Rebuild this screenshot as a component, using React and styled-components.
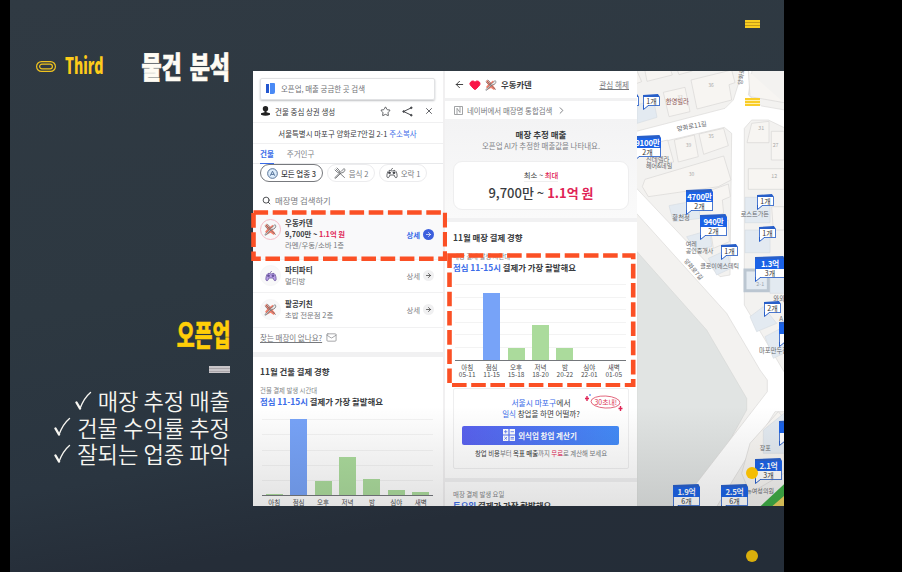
import React from "react";
import styled, { createGlobalStyle, css } from "styled-components";
import { ArrowLeft, ArrowRight, Star, X, Search, Mail, ChevronRight, Heart } from "lucide-react";

const Global = createGlobalStyle`
  *{box-sizing:border-box}
  html,body{margin:0;background:#000}
  body{font-family:"Noto Sans CJK KR","Noto Sans",sans-serif;overflow:hidden}
  svg{display:block;flex:none}
`;

const Stage = styled.main`width:902px;height:572px;padding-left:10px;background:#000;overflow:hidden`;
const Slide = styled.div`
  position:relative;width:774px;height:572px;display:grid;grid-template-columns:220px 531px;column-gap:23px;
  background:linear-gradient(170deg,#303a43 0%,#2d3841 45%,#2a3540 70%,#252d38 84%,#242d38 100%);
`;
const Aside = styled.div`display:flex;flex-direction:column;align-items:flex-end;padding-top:46px`;
const TitleRow = styled.div`display:flex;width:100%;height:40px;align-items:center;padding-left:26px`;
const Third = styled.div`
  width:38px;margin:-4px 0 0 9px;font:900 22px/36px "Noto Sans CJK KR",sans-serif;color:#fdcb1a;
  transform:scaleX(.64);transform-origin:left;white-space:nowrap;
`;
const Title = styled.h1`
  flex:1;display:flex;justify-content:flex-end;margin:-2px 0 0;font-weight:900;font-size:30px;line-height:38px;color:#fffcf4;
  white-space:nowrap;word-spacing:4px;-webkit-text-stroke:.7px #fffcf4;transform:scaleX(.73);transform-origin:right;
`;
const Name = styled.h2`
  margin:227px 0 0;font-weight:900;font-size:29.5px;line-height:41px;color:#ffce08;white-space:nowrap;
  -webkit-text-stroke:.5px #ffce08;transform:scaleX(.66);transform-origin:right;
`;
const Stripes = styled.div`
  width:${p => p.$w}px;height:${p => p.$h}px;margin-top:${p => p.$mt || 0}px;
  background:repeating-linear-gradient(${p => p.$c} 0 2px,${p => p.$d} 2px 3px);
`;
const Points = styled.ul`list-style:none;margin:14px 0 0;padding:0`;
const Point = styled.li`
  display:flex;justify-content:flex-end;align-items:center;gap:6px;height:26.6px;font-size:22.2px;font-weight:350;
  line-height:26.6px;color:#f6f5f0;white-space:nowrap;
`;
const Overlay = styled.div`position:absolute;left:${p => p.$x}px;top:${p => p.$y}px`;
const Dot = styled.div`width:12px;height:12px;border-radius:50%;background:${p => p.$c}`;

const Capture = styled.section`
  position:relative;margin-top:71px;width:531px;height:435px;display:grid;grid-template-columns:190px 194px 147px;
  overflow:hidden;background:#fff;
`;
const Shade = styled.div`
  position:absolute;inset:auto 0 0 0;height:100px;background:linear-gradient(rgba(20,20,20,0),rgba(20,20,20,.12));
`;
const Panel = styled.div`overflow:hidden;height:435px;border-left:${p => p.$line ? "2px solid #f1f0f1" : "0"};background:#fff`;
const Txt = styled.span`
  font-size:${p => p.$s || 7.5}px;font-weight:${p => p.$b || 400};color:${p => p.$c || "#3a3c40"};
  line-height:${p => p.$lh || 11}px;margin-top:${p => p.$mt || 0}px;white-space:nowrap;
  ${p => p.$u && css`text-decoration:underline;text-underline-offset:1px`};
`;
const Row = styled.div`
  display:flex;align-items:center;height:${p => p.$h}px;padding:${p => p.$pt || 0}px ${p => p.$pr || 8}px ${p => p.$pb || 0}px ${p => p.$pl || 7}px;
  gap:${p => p.$g || 0}px;justify-content:${p => p.$j || "flex-start"};border-bottom:${p => p.$line ? "1px solid #f0f0f1" : "0"};
`;
const SearchBox = styled.div`
  display:flex;align-items:center;gap:6px;margin:7px 8px 0 7px;padding:0 0 1px 5px;height:22px;border-radius:2px;
  border:1px solid #e1e2e4;box-shadow:0 1px 2px #bfc1c4;
`;
const Push = styled.div`margin-left:auto;display:flex;align-items:center;gap:${p => p.$g || 0}px`;
const Tabs = styled.div`display:flex;gap:13px;height:20px;padding-left:7px;border-bottom:1px solid #e8e9eb`;
const Tab = styled.div`
  height:20px;padding-top:4px;line-height:11px;font-size:7.5px;font-weight:${p => p.$on ? 700 : 400};
  color:${p => p.$on ? "#3a6be8" : "#808287"};border-bottom:${p => p.$on ? "1.5px solid #3a6be8" : "0"};
`;
const Chips = styled.div`display:flex;gap:4px;height:18px;padding-left:7px`;
const Chip = styled.div`
  display:flex;align-items:center;justify-content:center;gap:3px;width:${p => p.$w}px;height:18px;border-radius:9px;
  border:1px solid ${p => p.$on ? "#77797d" : "#ececee"};
`;
const Item = styled.div`
  display:flex;height:${p => p.$h}px;align-items:center;padding:0 9px 1px 7px;gap:4px;
  background:${p => p.$on ? "#f9f9fa" : "#fff"};border-bottom:1px solid #f1f1f2;
`;
const Lines = styled.div`display:flex;flex-direction:column`;
const Avatar = styled.div`
  display:flex;align-items:center;justify-content:center;width:21px;height:21px;border-radius:50%;background:#f8f8f9;
  border:1px solid ${p => p.$on ? "#f6bac5" : "#f6f6f7"};margin-top:${p => p.$on ? -10 : 0}px;
`;
const Go = styled.div`
  display:flex;align-items:center;justify-content:center;width:11px;height:11px;border-radius:50%;
  background:${p => p.$on ? "#3c5fdd" : "#f0f0f1"};color:${p => p.$on ? "#fff" : "#333"};
`;
const Band = styled.div`height:${p => p.$h || 5}px;background:#f1f1f2`;
const Trend = styled.div`display:flex;flex-direction:column;padding:${p => p.$pt}px 0 0 ${p => p.$pl || 7}px`;
const Plot = styled.div`
  display:flex;justify-content:space-between;align-items:flex-end;width:171px;height:${p => p.$h}px;
  margin:${p => p.$mt}px 0 0 ${p => p.$ml}px;padding:0 4px;border-bottom:1px solid #74777b;
  background:repeating-linear-gradient(#f3f3f3 0 1px,transparent 1px ${p => p.$step}px);
`;
const Bar = styled.div`width:17px;height:${p => p.$h}px;background:${p => p.$on ? "#77a3f8" : "#abdb9c"}`;
const Axis = styled.div`display:flex;justify-content:space-between;width:171px;margin:${p => p.$mt}px 0 0 ${p => p.$ml}px`;
const Tick = styled.div`
  display:flex;flex-direction:column;align-items:center;width:25px;font-size:6.5px;line-height:${p => p.$lh}px;
  color:#4b4d50;white-space:nowrap;
`;
const Estimate = styled.div`
  display:flex;flex-direction:column;align-items:center;height:99px;padding-top:9px;background:linear-gradient(#f3f3f4,#fafafa);
`;
const Card = styled.div`
  display:flex;flex-direction:column;align-items:center;width:176px;height:${p => p.$h}px;border-radius:${p => p.$r}px;
  margin-top:${p => p.$mt || 0}px;padding-top:${p => p.$pt}px;background:#fff;border:1px solid #eeeeef;
`;
const Rule = styled.div`width:34px;height:1px;background:#eee`;
const Cta = styled.div`
  display:flex;align-items:center;justify-content:center;gap:3px;width:157px;height:19px;margin:6px 2px 0 0;border-radius:2px;
  background:linear-gradient(90deg,#5961ee,#438bf7);
`;
const Map = styled.div`position:relative;height:435px;overflow:hidden;background:#f3f2f0`;
const PinBox = styled.div`
  position:absolute;left:${p => p.$x - 637}px;top:${p => p.$y - 71}px;width:${p => p.$w}px;
`;
const PinCap = styled.div`height:3px;background:#285fc9;clip-path:polygon(0 1px,${p => p.$small ? "88%" : "94%"} 0,100% 3px,0 3px)`;
const PinHead = styled.div`
  height:10px;background:#1b62e6;color:#fff;font-size:7.8px;font-weight:700;line-height:9px;text-align:center;
  white-space:nowrap;letter-spacing:-.2px;
`;
const PinCount = styled.div`
  height:9px;font-size:7px;line-height:8px;color:#333;text-align:center;white-space:nowrap;background:#fff;
  border:1px solid #4a78d0;border-top:0;
`;
const PinTail = styled.svg`margin-top:-1px`;

function Cutlery({ s = 13, red }) {
  return (
    <svg width={s} height={s} viewBox="0 0 24 24" fill="none" stroke={red ? "#66686c" : "#4b4d52"} strokeWidth="1.4" strokeLinecap="round">
      {red && <path d="M2 4 5 2l5 6 6-5 4 6-4 4 5 6-3 3-6-4-6 3-4-5 4-5Z" fill="#f7806c" stroke="none" />}
      <path d="m2 21 12-12 6-6c3 2 2 6-2 8l-4 1L4 22Z" fill="#f2f2f2" />
      <path d="m2 6 4 4c2 2 4 1 4 1l11 10M6 2l4 4c2 2 1 4 1 4M4 4l5 5" />
    </svg>
  );
}
const Pad = ({ fill = "none", stroke = "#3f4146" }) => (
  <svg width="12" height="12" viewBox="0 0 24 24" fill={fill} stroke={stroke} strokeWidth="1.6" strokeLinejoin="round">
    <path d="M10 7c0-3 2-1 3-5" fill="none" />
    <path d="M6 7c3-1 4 1 6 1s3-2 6-1c3 1 5 10 4 13-1 2-3 2-4 0l-2-4H8l-2 4c-1 2-3 2-4 0C1 17 3 8 6 7Z" />
    <circle cx="7" cy="11.5" r="2" fill={stroke} /><circle cx="16" cy="11.5" r="2" fill={stroke} />
  </svg>
);
const Check = () => (
  <svg width="17" height="21" viewBox="0 0 17 21" fill="none" stroke="#f6f5f0" strokeLinecap="round">
    <path d="M1.5 12.5 5 18.5" strokeWidth="2.4" /><path d="M5 18.5Q9 8 15.5 2.5" strokeWidth="1.4" />
  </svg>
);
const Share = () => (
  <svg width="11" height="11" viewBox="0 0 11 11" stroke="#44464a" fill="#44464a">
    <path d="M9.3 1.8 1.6 5.5l7.7 3.7" fill="none" /><circle cx="9.3" cy="1.8" r=".8" /><circle cx="1.6" cy="5.5" r=".8" /><circle cx="9.3" cy="9.2" r=".8" />
  </svg>
);
const Dashes = ({ w, h }) => (
  <svg width={w + 5} height={h + 5} fill="none">
    <rect x="2.5" y="2.5" width={w} height={h} stroke="#fb5025" strokeWidth="4.6" strokeDasharray="14.6 4.6" />
  </svg>
);
const Pin = ({ x, y, w = 27, v, n }) => (
  <PinBox $x={x} $y={y - 1} $w={w}>
    <PinCap $small={!v} />
    {v && <PinHead>{v}</PinHead>}
    <PinCount>{n}</PinCount>
    <PinTail width="7" height="5" viewBox="0 0 7 5"><path d="M.5 0V4.5L6 0" fill="#fff" stroke="#285fc9" /></PinTail>
  </PinBox>
);
function Chart({ bars, h, step, mt, ml, ranges }) {
  const names = ["아침", "점심", "오후", "저녁", "밤", "심야", "새벽"];
  return (
    <>
      <Plot $h={h} $step={step} $mt={mt} $ml={ml}>{bars.map((b, i) => <Bar key={i} $h={b} $on={i === 1} />)}</Plot>
      <Axis $ml={ml} $mt={ranges ? 3 : 1}>
        {names.map((n, i) => <Tick key={n} $lh={ranges ? 6.8 : 10}><span>{n}</span>{ranges && <span>{ranges[i]}</span>}</Tick>)}
      </Axis>
    </>
  );
}
const Shop = ({ h, on, icon, name, kind, price }) => (
  <Item $h={h} $on={on}>
    <Avatar $on={on}>{icon}</Avatar>
    <Lines>
      <Txt $b={700} $s={7.5} $lh={10.6}>{name}</Txt>
      {price && <Txt $b={700} $s={7.3} $lh={10.6}>9,700만 ~ <Txt $b={700} $s={7.3} $c="#df2456">1.1억 원</Txt></Txt>}
      <Txt $c="#77797d" $s={7.4} $lh={10.6}>{kind}</Txt>
    </Lines>
    <Push $g={3}><Txt $s={7.4} $b={on ? 700 : 400} $c={on ? "#3a6be8" : "#808287"}>상세</Txt><Go $on={on}><ArrowRight size={7} strokeWidth={2.4} /></Go></Push>
  </Item>
);

function BuildingPanel() {
  return (
    <Panel>
      <SearchBox>
        <svg width="9" height="11" viewBox="0 0 9 11"><path d="M0 1h3v9H0Z" fill="#2457cf" /><path d="M4 0h4q1 0 1 1v8q0 2-2 2H4Z" fill="#4a8af5" /></svg>
        <Txt $c="#707276" $s={7.45}>오픈업, 매출 궁금한 곳 검색</Txt>
      </SearchBox>
      <Row $h={23} $pl={8} $g={5} $pr={9} $line>
        <svg width="9" height="10" viewBox="0 0 9 10" fill="#222"><circle cx="4.5" cy="2.8" r="2.7" /><path d="M3.5 4h2v2.3L9 7.2v1.5Q4.5 11 0 8.7V7.2l3.5-.9Z" /></svg>
        <Txt>건물 중심 상권 생성</Txt>
        <Push $g={11}><Star size={11} color="#44464a" strokeWidth={1.8} /><Share /><X size={10} color="#44464a" strokeWidth={2} /></Push>
      </Row>
      <Row $h={21} $j="center" $g={2} $line><Txt $s={7.45}>서울특별시 마포구 양화로7안길 2-1</Txt><Txt $s={7.45} $c="#3a6be8">주소복사</Txt></Row>
      <Tabs><Tab $on>건물</Tab><Tab>주거인구</Tab></Tabs>
      <Chips>
        <Chip $w={63} $on>
          <svg width="11" height="11" viewBox="0 0 12 12" fill="#dcecfb" stroke="#4c6991"><circle cx="6" cy="6" r="5.3" /><path d="m3.5 8.5 2.5-5 2.5 5M4.5 7h3" fill="none" /></svg>
          <Txt $b={500} $s={7.5}>모든 업종 3</Txt>
        </Chip>
        <Chip $w={48}><Cutlery s={12} /><Txt $c="#77797d">음식 2</Txt></Chip>
        <Chip $w={48}><Pad /><Txt $c="#77797d">오락 1</Txt></Chip>
      </Chips>
      <Row $h={29} $pl={9} $g={4} $pt={8}><Search size={9} color="#44464a" strokeWidth={2.5} /><Txt $c="#77797d" $s={8.4}>매장명 검색하기</Txt></Row>
      <Shop h={49} on icon={<Cutlery red />} name="우동카덴" kind="라멘/우동/소바 1층" price />
      <Shop h={33} icon={<Pad fill="#baa0e8" stroke="#665399" />} name="파티파티" kind="멀티방" />
      <Shop h={35} icon={<Cutlery red />} name="팔공키친" kind="초밥 전문점 2층" />
      <Row $h={24} $g={4} $pb={5}><Txt $s={7.5} $c="#77797d" $u>찾는 매장이 없나요?</Txt><Mail size={11} color="#85878a" strokeWidth={1.6} /></Row>
      <Band />
      <Trend $pt={8}>
        <Txt $b={700} $s={8.4} $lh={12}>11월 건물 결제 경향</Txt>
        <Txt $s={6.4} $lh={8} $mt={10} $c="#85878a">건물 결제 발생 시간대</Txt>
        <Txt $b={700} $s={8.4} $lh={12}><Txt $b={700} $s={8.4} $c="#3a6be8">점심 11-15시</Txt> 결제가 가장 활발해요</Txt>
      </Trend>
      <Chart bars={[1, 76, 14, 38, 16, 5, 3]} h={77} step={15.3} mt={12} ml={9} />
    </Panel>
  );
}

function StorePanel() {
  return (
    <Panel $line>
      <Row $h={27} $pl={9} $g={4} $pr={8}>
        <ArrowLeft size={11} color="#333" /><Heart size={12} color="#f91748" fill="#f91748" /><Cutlery s={12} red />
        <Txt $b={700} $s={8.4}>우동카덴</Txt><Push><Txt $c="#77797d" $u $s={7.6}>관심 해제</Txt></Push>
      </Row>
      <Band $h={3} />
      <Row $h={18} $pl={9} $g={4}>
        <svg width="9" height="9" viewBox="0 0 9 9" fill="none" stroke="#898b8e" strokeWidth=".8"><path d="M.5.5h8v8h-8ZM3 8V2.3L6 6.5V1" /></svg>
        <Txt $c="#77797d" $s={7.45}>네이버에서 매장명 통합검색</Txt><ChevronRight size={11} color="#77797d" />
      </Row>
      <Estimate>
        <Txt $b={700} $s={8.5} $lh={12}>매장 추정 매출</Txt>
        <Txt $c="#818387" $s={7.45} $lh={12}>오픈업 AI가 추정한 매출값을 나타내요.</Txt>
        <Card $h={49} $r={9} $mt={9} $pt={6}>
          <Txt $s={7.4} $lh={13}>최소 ~ <Txt $s={7.4} $b={500} $c="#df2456">최대</Txt></Txt>
          <Rule />
          <Txt $b={500} $s={13} $lh={22}>9,700만 ~ <Txt $b={700} $s={13} $c="#df2456">1.1억 원</Txt></Txt>
        </Card>
      </Estimate>
      <Band $h={4} />
      <Trend $pt={9} $pl={8}>
        <Txt $b={700} $s={8.4} $lh={12}>11월 매장 결제 경향</Txt>
        <Txt $s={6.4} $lh={8} $mt={10} $c="#85878a">매장 결제 발생 시간대</Txt>
        <Txt $b={700} $s={8.4} $lh={12}><Txt $b={700} $s={8.4} $c="#3a6be8">점심 11-15시</Txt> 결제가 가장 활발해요</Txt>
      </Trend>
      <Chart bars={[0, 67, 12, 35, 12, 0, 0]} h={77} step={12.6} mt={11} ml={10} ranges={["05-11", "11-15", "15-18", "18-20", "20-22", "22-01", "01-05"]} />
      <Row $h={100} $pl={8} $pt={1}>
        <Card $h={81} $r={2} $pt={8}>
          <Txt $s={7.8} $lh={11.5}><Txt $s={7.8} $c="#3a6be8">서울시 마포구</Txt>에서</Txt>
          <Txt $s={7.5} $lh={11.5}><Txt $s={7.5} $c="#3a6be8">일식</Txt> 창업을 하면 어떨까?</Txt>
          <Cta>
            <svg width="12" height="12" viewBox="0 0 12 12"><path d="M0 0h5.4v5.4H0ZM6.6 0H12v5.4H6.6ZM0 6.6h5.4V12H0ZM6.6 6.6H12V12H6.6Z" fill="#fff" /><path d="M1 2.7h3.4M2.7 1v3.4M7.6 2.7H11M1.4 8l2.6 2.6M4 8l-2.6 2.6M7.6 8.5H11M7.6 10H11" stroke="#5571f0" strokeWidth=".8" /></svg>
            <Txt $c="#fff" $b={700} $s={7.5}>외식업 창업 계산기</Txt>
          </Cta>
          <Txt $s={6.4} $lh={17} $c="#77797d"><Txt $s={6.4}>창업 비용</Txt>부터 <Txt $s={6.4} $b={500}>목표 매출</Txt>까지 <Txt $s={6.4} $c="#df2456">무료</Txt>로 계산해 보세요</Txt>
        </Card>
      </Row>
      <Band $h={4} />
      <Trend $pt={8} $pl={8}>
        <Txt $s={6.4} $lh={9} $c="#85878a">매장 결제 발생 요일</Txt>
        <Txt $b={700} $s={8.4} $lh={12}><Txt $b={700} $s={8.4} $c="#3a6be8">토요일</Txt> 결제가 가장 활발해요</Txt>
      </Trend>
    </Panel>
  );
}

const MapText = styled.text`font-family:"Noto Sans CJK KR",sans-serif;font-size:${p => p.$s || 19}px;fill:${p => p.$c || "#66686c"}`;

function StreetMap() {
  return (
    <Map>
      <svg width="147" height="435" viewBox="6 213 441 1305" preserveAspectRatio="none">
        <path d="M6 755 215 990 335 1195V1230L175 1518H6Z" fill="#e1e4e3" stroke="#d6d8d6" strokeWidth="2" />
        <g fill="#fff" stroke="#dbdad8" strokeWidth="2">
          <path d="M0 395 270 325 295 300 325 205H352L340 285 380 318 450 330V384L400 360H350L328 385V915L450 1120V1235H420L245 1520H130L397 1175V1140L375 1110 275 940 0 635V560L255 830 285 825 290 400 268 382 75 427 0 443Z" />
        </g>
        <g fill="#f7f5f2" stroke="#d8d7d4" strokeWidth="2">
          <path d="M168 240 290 210 300 248 282 254 290 300 186 327ZM85 277 150 262 165 335 102 350ZM6 213 20 245 6 250M30 213 36 244 112 225 108 213M128 213 132 224 172 213" />
          <path d="M118 420 178 405 190 470 130 486ZM192 402 266 385 280 437 206 463ZM62 428 98 420 116 486 70 492ZM22 560 30 538 266 468 288 540 250 560 40 590Z" />
          <path d="M336 428 350 370 402 364V428ZM409 394H447V480H409ZM340 506H447V568H340ZM340 213 345 290 447 308M225 680 280 660 283 725 235 745Z" />
          <path d="M215 575 280 552 286 590 262 600 266 640 230 650M410 620H447V690H415ZM345 1330 430 1235 447 1255V1420L345 1480 320 1420Z" />
        </g>
        <g fill="#e3eaf1" stroke="#d6dce3" strokeWidth="2">
          <path d="M6 315 56 300 66 352 6 370ZM102 617 190 600 195 655 115 665ZM155 710 225 690 230 740 180 750ZM220 775 275 750 288 805 245 825Z" />
          <path d="M330 592H405V668H330ZM330 690H405V758H330ZM405 800H447V880H405ZM345 950 385 920 425 970 365 995ZM390 1010 447 980V1060L415 1075ZM385 1290 447 1240V1360H385Z" />
          <path d="M330 810H400V872H330Z" stroke="#bbc6d1" strokeWidth="9" />
        </g>
        <path d="M375 1520 450 1450V1520Z" fill="#3dab45" /><path d="M410 1520 450 1485V1520Z" fill="#e9cf5e" />
        <g transform="translate(0 6)">
          <MapText x="220" y="254" $s={15} $c="#aaa">36</MapText><MapText x="152" y="434" $s={15} $c="#aaa">39</MapText><MapText x="220" y="408" $s={15} $c="#aaa">35</MapText>
          <MapText x="161" y="522" $s={15} $c="#aaa">30</MapText><MapText x="370" y="383" $s={16} $c="#aaa">31</MapText><MapText x="413" y="435" $s={16} $c="#aaa">27</MapText>
          <MapText x="409" y="527" $s={16} $c="#aaa">12</MapText><MapText x="364" y="852" $s={16} $c="#9aa3ad">2-1</MapText><MapText x="127" y="290" $s={14} $c="#c5c2c0">32</MapText>
          <MapText x="92" y="307" $c="#8d5452">한영빌라</MapText><MapText x="33" y="479">신데렐라</MapText><MapText x="33" y="499" $s={18}>헤어&amp;네일</MapText>
          <MapText x="112" y="655">황천정</MapText><MapText x="317" y="643" $s={18.5}>로스트가든</MapText><MapText x="152" y="733" $s={18}>여레</MapText>
          <MapText x="152" y="754" $s={18}>공인중개사</MapText><MapText x="196" y="797" $s={18}>클로이에스테틱</MapText><MapText x="415" y="897">와와</MapText><MapText x="433" y="957">A</MapText>
          <MapText x="372" y="1054">마포만두집</MapText><MapText x="374" y="1344" $s={18}>장포</MapText><MapText x="334" y="1472" $s={18}>뉴여성의원</MapText>
        </g>
        <MapText transform="translate(127 394) rotate(-11)" $s={19}>양화로11길</MapText>
        <MapText transform="translate(146 783) rotate(50)" $s={18}>양화로7길</MapText>
        <MapText transform="translate(322 255) rotate(-83)" $s={18}>양화로</MapText>
      </svg>
      <Pin x={622} y={95} w={17} n="" /><Pin x={643} y={95} w={17} n="1개" />
      <Pin x={634} y={136} v="9100만" n="2개" /><Pin x={686} y={190} v="4700만" n="2개" /><Pin x={700} y={215} v="940만" n="2개" />
      <Pin x={757} y={195} w={17} n="1개" /><Pin x={759} y={227} w={17} n="1개" /><Pin x={721} y={245} w={17} n="1개" />
      <Pin x={755} y={257} w={30} v="1.3억" n="3개" /><Pin x={764} y={302} w={17} n="2개" /><Pin x={779} y={322} v="9" n="" />
      <Pin x={779} y={421} v="4" n="" /><Pin x={755} y={459} v="2.1억" n="3개" /><Pin x={673} y={485} v="1.9억" n="6개" /><Pin x={721} y={485} v="2.5억" n="6개" />
    </Map>
  );
}

export default function App() {
  return (
    <Stage>
      <Global />
      <Slide>
        <Aside>
          <TitleRow>
            <svg width="20" height="11" viewBox="0 0 20 11" fill="none" stroke="#f0c31f"><rect x=".6" y=".6" width="18.8" height="9.8" rx="4.9" strokeWidth="1.2" /><rect x="3.6" y="3.2" width="12.8" height="4.6" rx="2.3" strokeWidth="1.2" /></svg>
            <Third>Third</Third>
            <Title>물건 분석</Title>
          </TitleRow>
          <Name>오픈업</Name>
          <Stripes $w={21} $h={7} $mt={12} $c="#c9c6c9" $d="#aaa6aa" />
          <Points>
            {["매장 추정 매출", "건물 수익률 추정", "잘되는 업종 파악"].map(t => <Point key={t}><Check />{t}</Point>)}
          </Points>
        </Aside>
        <Capture><BuildingPanel /><StorePanel /><StreetMap /><Shade /></Capture>
        <Overlay $x={240.5} $y={209.5}><Dashes w={191.7} h={46.3} /></Overlay>
        <Overlay $x={437.1} $y={252.8}><Dashes w={183.7} h={129.7} /></Overlay>
        <Overlay $x={575} $y={393}>
          <svg width="40" height="20" viewBox="0 0 40 20" fill="none" stroke="#dc4560"><ellipse cx="20.5" cy="9" rx="14.5" ry="6" strokeWidth=".8" transform="rotate(3 20 9)" /><path d="M2 3v5M0 5.5h4M35.5 13v5M33.5 15.5h4" strokeWidth="1.4" stroke="#df2456" /><circle cx="5" cy="2" r=".5" stroke="#4a8af5" /><MapText x="9.5" y="11.6" $s={6.9} $c="#dc3555" stroke="none">30초내!</MapText></svg>
        </Overlay>
        <Overlay $x={735} $y={20}><Stripes $w={15} $h={8} $c="#f8cd20" $d="#c49a19" /></Overlay>
        <Overlay $x={735} $y={98}><Stripes $w={15} $h={8} $c="#f9cd29" $d="#fff0b2" /></Overlay>
        <Overlay $x={736} $y={467}><Dot $c="#f4bd04" /></Overlay>
        <Overlay $x={736} $y={550}><Dot $c="#d9ae0c" /></Overlay>
      </Slide>
    </Stage>
  );
}
